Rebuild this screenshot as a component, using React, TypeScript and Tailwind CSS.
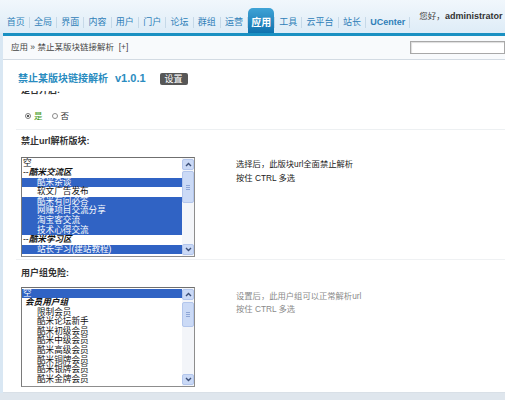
import React from "react";

type Opt = { text: string; kind: "plain" | "group" | "child"; selected?: boolean };

const tabs = ["首页", "全局", "界面", "内容", "用户", "门户", "论坛", "群组", "运营", "应用", "工具", "云平台", "站长", "UCenter"];

const forumOptions: Opt[] = [
  { text: "空", kind: "plain" },
  { text: "酷米交流区", kind: "group" },
  { text: "酷米杂谈", kind: "child", selected: true },
  { text: "软文广告发布", kind: "child" },
  { text: "酷米有问必答", kind: "child", selected: true },
  { text: "网赚项目交流分享", kind: "child", selected: true },
  { text: "淘宝客交流", kind: "child", selected: true },
  { text: "技术心得交流", kind: "child", selected: true },
  { text: "酷米学习区", kind: "group" },
  { text: "站长学习(建站教程)", kind: "child", selected: true },
];

const groupOptions: Opt[] = [
  { text: "空", kind: "plain", selected: true },
  { text: "会员用户组", kind: "group" },
  { text: "限制会员", kind: "child" },
  { text: "酷米论坛新手", kind: "child" },
  { text: "酷米初级会员", kind: "child" },
  { text: "酷米中级会员", kind: "child" },
  { text: "酷米高级会员", kind: "child" },
  { text: "酷米铜牌会员", kind: "child" },
  { text: "酷米银牌会员", kind: "child" },
  { text: "酷米金牌会员", kind: "child" },
];

function Chevron({ up }: { up?: boolean }) {
  return (
    <svg width="7" height="5" viewBox="0 0 7 5">
      <polyline
        points={up ? "1,4 3.5,1.5 6,4" : "1,1 3.5,3.5 6,1"}
        fill="none"
        stroke="#3b4f78"
        strokeWidth="1.4"
      />
    </svg>
  );
}

function ListBox({ options, thumbTop, thumbHeight, dashed }: { options: Opt[]; thumbTop: string; thumbHeight: string; dashed?: boolean }) {
  return (
    <div className="flex h-[100px] w-[174px] shrink-0 border border-[#8d8d8d] border-t-[#6f6f6f] border-l-[#7a7a7a] bg-white">
      <div className="flex-1 overflow-hidden pt-[0.5px]">
        {options.map((o, i) => (
          <div
            key={i}
            className={
              "h-[9.6px] whitespace-nowrap text-[8.6px] leading-[9.6px] " +
              (o.selected ? "bg-[#3063c4] text-white " : "text-[#111] ") +
              (o.kind === "child" ? "pl-[15px]" : o.kind === "group" && !dashed ? "pl-[3px]" : "pl-[1px]")
            }
          >
            {o.kind === "group" ? (
              <>
                {dashed && <span>--</span>}
                <b className="italic">{o.text}</b>
              </>
            ) : (
              o.text
            )}
          </div>
        ))}
      </div>
      <div className="flex w-[12px] flex-col bg-[#f3f5f9] py-[1px]">
        <div className="flex h-[11px] items-center justify-center rounded-[2px] border border-[#b3c6ec] bg-[#cad9f6]">
          <Chevron up />
        </div>
        <div className={"flex flex-col items-center justify-center gap-[1px] rounded-[2px] border border-[#b3c6ec] bg-[#cbdaf6] " + thumbTop + " " + thumbHeight}>
          <div className="h-px w-[4px] bg-[#8ea6d6]" />
          <div className="h-px w-[4px] bg-[#8ea6d6]" />
          <div className="h-px w-[4px] bg-[#8ea6d6]" />
        </div>
        <div className="flex-1" />
        <div className="flex h-[11px] items-center justify-center rounded-[2px] border border-[#b3c6ec] bg-[#cad9f6]">
          <Chevron />
        </div>
      </div>
    </div>
  );
}

export default function App() {
  return (
    <div className="h-[400px] w-[505px] overflow-hidden bg-[#dfe6ed] font-['Liberation_Sans','Noto_Sans_CJK_SC',sans-serif]">
      {/* top menu */}
      <div className="flex h-[33px] items-end whitespace-nowrap bg-gradient-to-b from-[#f1f7fc] to-[#deecf7] pl-[2.5px]">
        {tabs.map((t, i) => {
          const active = t === "应用";
          return (
            <React.Fragment key={t}>
              {i > 0 && <span className="mb-[5px] h-[11px] w-px shrink-0 bg-[#c6d9e8]" />}
              {active ? (
                <span className="flex h-[25px] shrink-0 items-center rounded-t-[5px] bg-gradient-to-b from-[#3ea3d6] to-[#0f72ae] px-[3px] pt-[3px] text-[10px] font-bold text-white">
                  {t}
                </span>
              ) : (
                <span
                  className={
                    "flex h-[25px] shrink-0 items-center px-[4.15px] pt-[4px] text-[9px] text-[#2f80b8] " +
                    (t === "UCenter" ? "font-bold" : "")
                  }
                >
                  {t}
                </span>
              )}
            </React.Fragment>
          );
        })}
        <span className="mb-[5px] h-[11px] w-px shrink-0 bg-[#c6d9e8]" />
        <span className="ml-[9px] self-start pt-[11px] text-[8.5px] leading-[10px] text-[#444]">
          您好，<b className="text-[9px] text-[#333]">administrator</b>
        </span>
      </div>

      <div className="flex">
        <div className="w-[3px] shrink-0 bg-[#d9e7f3]" />
        <div className="flex-1">
          <div className="h-[3px] bg-[#1a90c2]" />
          {/* breadcrumb */}
          <div className="flex h-[24px] items-center border-b border-[#d3dbe3] bg-[#f8fafc] pl-[8px]">
            <span className="whitespace-nowrap text-[8.5px] text-[#444]">
              应用 » 禁止某版块链接解析 &nbsp;[+]
            </span>
            <div className="ml-auto mt-[-1px] h-[13px] w-[95px] shrink-0 border border-[#a8a8a8] bg-white shadow-[inset_1px_1px_1px_#ddd]" />
          </div>

          {/* content */}
          <div className="flex flex-col border-b border-[#d9e0e7] bg-white pb-[5px] pl-[13px]">
            <div className="ml-[2px] mt-[12px] flex h-[13px] items-center whitespace-nowrap">
              <span className="text-[10px] font-bold text-[#2a8cc0]">禁止某版块链接解析</span>
              <span className="ml-[7px] text-[11px] font-bold text-[#2a8cc0]">v1.0.1</span>
              <span className="ml-[14px] rounded-[2px] bg-[#575757] px-[5px] text-[9px] leading-[12px] text-white">设置</span>
            </div>
            <div className="ml-[5px] mt-[6px] h-[6px] overflow-hidden">
              <div className="-mt-[6px] text-[9px] font-bold leading-[11px] text-[#333]">是否开启:</div>
            </div>
            <div className="ml-[9px] mt-[14px] flex h-[10px] items-center text-[8.5px]">
              <span className="flex h-[6px] w-[6px] items-center justify-center rounded-full border border-[#7c7c7c] bg-white">
                <span className="h-[2px] w-[2px] rounded-full bg-[#222]" />
              </span>
              <span className="ml-[3px] text-[#3f9a22]">是</span>
              <span className="ml-[9px] h-[6px] w-[6px] rounded-full border border-[#8c8c8c] bg-white" />
              <span className="ml-[3px] text-[#333]">否</span>
            </div>
            <div className="mt-[8px] h-px bg-[#edf0f2]" />
            <div className="ml-[5px] mt-[6px] text-[9px] font-bold leading-[11px] text-[#333]">禁止url解析版块:</div>
            <div className="ml-[5px] mt-[10px] flex">
              <ListBox options={forumOptions} thumbTop="mt-[1px]" thumbHeight="h-[32px]" dashed />
              <div className="ml-[41px] text-[8.3px] leading-[14px] text-[#222]">
                <div>选择后，此版块url全面禁止解析</div>
                <div>按住 CTRL 多选</div>
              </div>
            </div>
            <div className="mt-[2px] h-px bg-[#eff1f3]" />
            <div className="ml-[5px] mt-[8px] text-[9px] font-bold leading-[11px] text-[#333]">用户组免险:</div>
            <div className="ml-[5px] mt-[8px] flex">
              <ListBox options={groupOptions} thumbTop="mt-[2px]" thumbHeight="h-[25px]" />
              <div className="ml-[41px] pt-[3px] text-[8.3px] leading-[13px] text-[#8a8a8a]">
                <div>设置后，此用户组可以正常解析url</div>
                <div>按住 CTRL 多选</div>
              </div>
            </div>
          </div>
        </div>
      </div>
    </div>
  );
}
